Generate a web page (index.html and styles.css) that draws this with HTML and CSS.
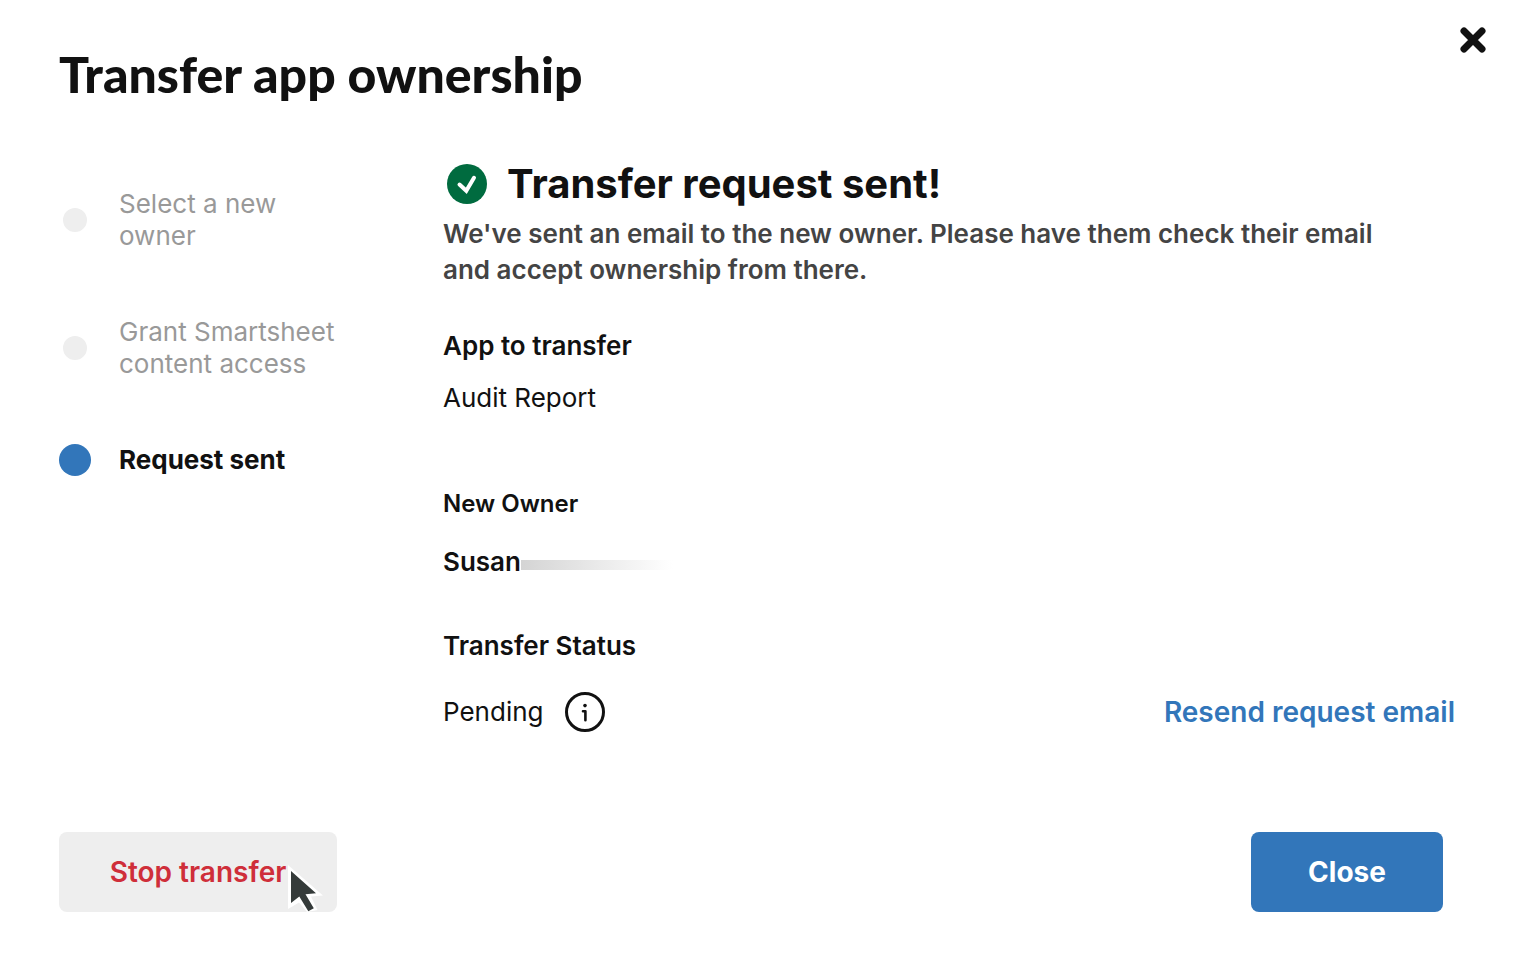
FILE: index.html
```
<!DOCTYPE html>
<html lang="en">
<head>
    <meta charset="UTF-8">
    <meta name="viewport" content="width=device-width, initial-scale=1.0">
    <title>Transfer app ownership</title>
    <link rel="stylesheet" href="styles.css">
</head>
<body>
    <div class="modal" role="dialog" aria-labelledby="modal-title">
        <header class="modal-header">
            <h1 id="modal-title">Transfer app ownership</h1>
            <button class="dismiss" type="button" aria-label="Dismiss">
                <svg width="26" height="26" viewBox="0 0 26 26"><path d="M4 4 L22 22 M22 4 L4 22"/></svg>
            </button>
        </header>
        <main class="modal-body">
            <ol class="steps">
                <li class="step"><span class="dot"></span><span class="step-name">Select a new owner</span></li>
                <li class="step"><span class="dot"></span><span class="step-name">Grant Smartsheet content access</span></li>
                <li class="step active"><span class="dot"></span><span class="step-name">Request sent</span></li>
            </ol>
            <section class="content">
                <div class="success">
                    <svg class="check" width="40" height="40" viewBox="0 0 40 40">
                        <circle cx="20" cy="20" r="20"/>
                        <path d="M12.5 20.5 L19.3 26.8 L27 13.8"/>
                    </svg>
                    <h2>Transfer request sent!</h2>
                </div>
                <p class="message">We've sent an email to the new owner. Please have them check their email and accept ownership from there.</p>
                <h3>App to transfer</h3>
                <p class="app-name">Audit Report</p>
                <h3 class="small">New Owner</h3>
                <p class="owner">Susan<span class="redacted"></span></p>
                <h3>Transfer Status</h3>
                <div class="status">
                    <span>Pending</span>
                    <svg class="info" width="40" height="40" viewBox="0 0 40 40">
                        <circle cx="20" cy="20" r="18.5"/>
                        <path class="info-stem" d="M18 19.3 H20.4 V28.3"/>
                        <circle class="info-dot" cx="20" cy="13.6" r="1.8"/>
                    </svg>
                    <a class="resend" href="#">Resend request email</a>
                </div>
            </section>
        </main>
        <footer class="modal-footer">
            <button class="btn stop" type="button">
                Stop transfer
                <svg class="cursor" width="38" height="50" viewBox="0 0 38 50">
                    <path class="cursor-edge" d="M1 0 L36 30.5 L24 31.5 L30.5 45 L20 47 L12 37.5 L1 44 Z"/>
                    <path class="cursor-fill" d="M4 6 L29 28.3 L18.5 29.3 L26.8 43.3 L21.3 46.3 L12.3 31.5 L4 38 Z"/>
                </svg>
            </button>
            <button class="btn close" type="button">Close</button>
        </footer>
    </div>
</body>
</html>
```
FILE: styles.css
```
* {
    box-sizing: border-box;
}
body {
    margin: 0;
    background: #fff;
    color: #111;
    font-family: Inter, "Liberation Sans", sans-serif;
    font-size: 26px;
    line-height: 36px;
}
h1, h2, h3, p, ol {
    margin: 0;
    padding: 0;
}
.modal {
    display: flex;
    flex-direction: column;
    min-height: 100vh;
    padding: 24px 36px 52px 59px;
}
.modal-header {
    display: flex;
    justify-content: space-between;
    align-items: flex-start;
    padding-bottom: 62px;
}
h1 {
    padding-top: 22px;
    font-family: Lato, sans-serif;
    font-size: 50px;
    font-weight: 900;
    line-height: 56px;
}
.dismiss {
    display: flex;
    margin-top: 3px;
    padding: 0;
    border: none;
    background: none;
    cursor: pointer;
}
.dismiss path {
    stroke: #111;
    stroke-width: 7;
    stroke-linecap: round;
}
.modal-body {
    display: flex;
    flex: 1;
    padding-right: 31px;
}
.steps {
    display: flex;
    flex-direction: column;
    gap: 64px;
    flex: 0 0 300px;
    margin-right: 84px;
    padding-top: 24px;
    list-style: none;
    line-height: 32px;
}
.step {
    display: flex;
    align-items: center;
    gap: 28px;
    color: #999;
}
.dot {
    flex: none;
    width: 32px;
    height: 32px;
    border: 4px solid #fff;
    border-radius: 50%;
    background: #eee;
}
.active {
    color: #111;
    font-weight: 700;
}
.active .dot {
    border: none;
    background: #3276ba;
}
.content {
    flex: 1;
}
.success {
    display: flex;
    align-items: center;
    gap: 20px;
    padding-left: 4px;
    height: 40px;
    margin-bottom: 12px;
}
h2 {
    font-size: 40px;
    font-weight: 700;
    line-height: 40px;
}
.check circle {
    fill: #006b3f;
}
.check path {
    fill: none;
    stroke: #fff;
    stroke-width: 4;
    stroke-linecap: round;
}
.message {
    max-width: 960px;
    margin-bottom: 40px;
    color: #444;
    font-weight: 600;
}
h3 {
    font-size: 26px;
    font-weight: 600;
}
.app-name {
    margin-top: 16px;
    margin-bottom: 70px;
}
.small {
    font-size: 24px;
}
.owner {
    display: flex;
    align-items: center;
    margin-top: 22px;
    margin-bottom: 48px;
    font-weight: 600;
}
.redacted {
    width: 152px;
    height: 10px;
    margin-top: 6px;
    background: linear-gradient(to right, #d4d4d4, #fff);
}
.status {
    display: flex;
    align-items: center;
    gap: 21px;
    margin-top: 28px;
}
.info {
    fill: none;
    stroke: #111;
    stroke-width: 3;
    stroke-linecap: round;
}
.info .info-stem {
    stroke-width: 2.6;
    stroke-linejoin: round;
}
.info .info-dot {
    fill: #111;
    stroke: none;
}
.resend {
    margin-left: auto;
    color: #3276ba;
    font-size: 28px;
    font-weight: 600;
    text-decoration: none;
}
.modal-footer {
    display: flex;
    justify-content: space-between;
    padding-right: 43px;
}
.btn {
    position: relative;
    height: 80px;
    border: none;
    border-radius: 8px;
    font-family: inherit;
    font-size: 28px;
    font-weight: 600;
    cursor: pointer;
}
.stop {
    min-width: 278px;
    background: #eee;
    color: #cf2e3a;
}
.close {
    min-width: 192px;
    background: #3276ba;
    color: #fff;
    font-weight: 700;
}
/* pointer resting on the button */
.cursor {
    position: absolute;
    right: 12px;
    bottom: -3px;
}
.cursor-edge {
    fill: #fff;
}
.cursor-fill {
    fill: #353b3a;
}
```
